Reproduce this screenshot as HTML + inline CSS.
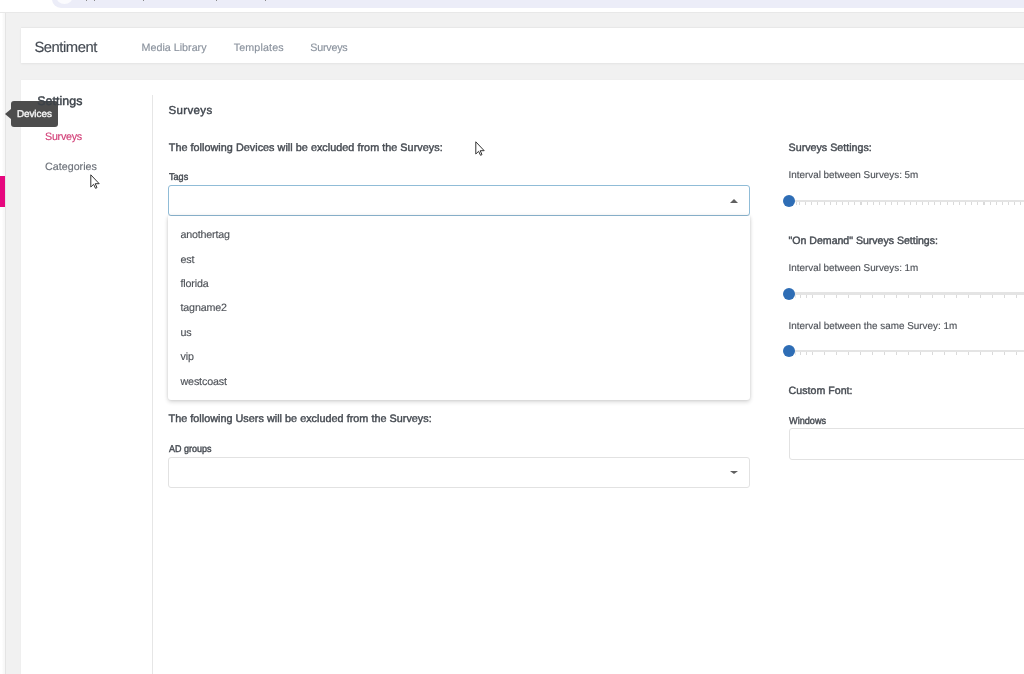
<!DOCTYPE html>
<html><head><meta charset="utf-8"><style>
*{margin:0;padding:0;box-sizing:border-box}
html,body{width:1024px;height:674px;overflow:hidden;background:#f1f1f1;font-family:"Liberation Sans",sans-serif;position:relative}
.t{position:absolute;white-space:nowrap;text-rendering:geometricPrecision}
.abs{position:absolute}
.track{position:absolute;left:788px;width:240px;height:2.4px;background:#e4e4e4}
.ticks{position:absolute;width:240px;height:3px}
.thumb{position:absolute;left:782.5px;width:12px;height:12px;border-radius:50%;background:#2e6db5}
</style></head><body>
<div id="root" style="position:absolute;left:0;top:0;width:1024px;height:674px;overflow:hidden;background:#f1f1f1;filter:blur(0.4px);">
<!-- browser chrome -->
<div class="abs" style="left:0;top:0;width:1024px;height:12px;background:#fff"></div>
<div class="abs" style="left:52px;top:-10px;width:990px;height:17.5px;background:#ecedf8;border-radius:0 0 0 9px"></div>
<div class="abs" style="left:56px;top:-12px;width:17px;height:16px;border-radius:50%;background:#fbfbfe"></div>
<!--bits--><div class="abs" style="left:86px;top:0;width:1.2px;height:1.2px;background:#8a8a8a"></div><div class="abs" style="left:94px;top:0;width:1.2px;height:1.2px;background:#8a8a8a"></div><div class="abs" style="left:142.5px;top:0;width:1.2px;height:1.2px;background:#8a8a8a"></div><div class="abs" style="left:216px;top:0;width:1.2px;height:1.2px;background:#8a8a8a"></div><div class="abs" style="left:265px;top:0;width:1.2px;height:1.2px;background:#8a8a8a"></div>
<div class="abs" style="left:0;top:12px;width:1024px;height:1px;background:#e8e8e8"></div>
<div class="abs" style="left:0;top:13px;width:4.8px;height:661px;background:linear-gradient(90deg,#fff 0 1.8px,#f8f8f8 3.8px)"></div>
<div class="abs" style="left:4.8px;top:13px;width:1.3px;height:661px;background:#e4e4e4"></div>
<!-- header card -->
<div class="abs" style="left:21px;top:28.3px;width:1010px;height:34.6px;background:#fff;box-shadow:0 1px 2px rgba(0,0,0,0.06),0 -1px 1px rgba(0,0,0,0.03)"></div>
<!-- main card -->
<div class="abs" style="left:21px;top:79.6px;width:1010px;height:620px;background:#fff;box-shadow:0 0 1px rgba(0,0,0,0.05)"></div>
<div class="abs" style="left:152px;top:95px;width:1px;height:600px;background:#e6e6e6"></div>
<!-- pink bar -->
<div class="abs" style="left:0;top:176px;width:4.8px;height:31px;background:#e6077e"></div>
<!-- select 1 -->
<div class="abs" style="left:168px;top:185px;width:582px;height:31px;border:1px solid #90bcd7;border-radius:3px;background:#fff"></div>
<div class="abs" style="left:729.8px;top:198.8px;width:0;height:0;border-left:4px solid transparent;border-right:4px solid transparent;border-bottom:4px solid #606060"></div>
<!-- dropdown -->
<div class="abs" style="left:168px;top:216px;width:582px;height:184px;background:#fff;border-radius:0 0 3px 3px;box-shadow:0 2px 4px rgba(0,0,0,0.16),0 0 2px rgba(0,0,0,0.08),0 -1px 4px rgba(0,0,0,0.05)"></div>
<!-- select 2 -->
<div class="abs" style="left:168px;top:457px;width:582px;height:31.2px;border:1px solid #e2e2e2;border-radius:3px;background:#fff"></div>
<div class="abs" style="left:729.8px;top:471.4px;width:0;height:0;border-left:4px solid transparent;border-right:4px solid transparent;border-top:3.9px solid #606060"></div>
<!-- windows input -->
<div class="abs" style="left:788.6px;top:428.2px;width:260px;height:31.4px;border:1px solid #e2e2e2;border-radius:3px;background:#fff"></div>
<div class="track" style="top:199.5px"></div>
<div class="ticks" style="left:799px;top:201.6px;background-image:repeating-linear-gradient(90deg,#dadada 0 1px,transparent 1px 6.15px)"></div><div class="abs" style="left:796px;top:201.6px;width:1px;height:3px;background:#dadada"></div>
<div class="thumb" style="top:194.7px"></div>
<div class="track" style="top:292.4px"></div>
<div class="ticks" style="left:800px;top:294.5px;background-image:repeating-linear-gradient(90deg,#dadada 0 1px,transparent 1px 12px)"></div><div class="abs" style="left:806px;top:294.5px;width:1px;height:3px;background:#dadada"></div><div class="abs" style="left:794.5px;top:294.5px;width:1px;height:3px;background:#ececec"></div>
<div class="thumb" style="top:287.6px"></div>
<div class="track" style="top:349.7px"></div>
<div class="ticks" style="left:800px;top:351.8px;background-image:repeating-linear-gradient(90deg,#dadada 0 1px,transparent 1px 12px)"></div><div class="abs" style="left:806px;top:351.8px;width:1px;height:3px;background:#dadada"></div><div class="abs" style="left:794.5px;top:351.8px;width:1px;height:3px;background:#ececec"></div>
<div class="thumb" style="top:344.9px"></div>
<!-- tooltip -->
<div class="abs" style="left:11px;top:101px;width:47px;height:25.5px;background:#4d4d4d;border-radius:3px"></div>
<div class="abs" style="left:5.2px;top:108.8px;width:0;height:0;border-top:5px solid transparent;border-bottom:5px solid transparent;border-right:6px solid #4d4d4d"></div>
<div class="t" style="left:34.40px;top:41.27px;font-size:14.8px;line-height:14.8px;color:#454b53;-webkit-text-stroke:0.15px #454b53;letter-spacing:-0.459px;">Sentiment</div>
<div class="t" style="left:141.60px;top:42.84px;font-size:10.7px;line-height:10.7px;color:#8b939e;-webkit-text-stroke:0.15px #8b939e;letter-spacing:0.014px;">Media Library</div>
<div class="t" style="left:233.75px;top:42.84px;font-size:10.7px;line-height:10.7px;color:#8b939e;-webkit-text-stroke:0.15px #8b939e;letter-spacing:0.137px;">Templates</div>
<div class="t" style="left:310.25px;top:42.84px;font-size:10.7px;line-height:10.7px;color:#8b939e;-webkit-text-stroke:0.15px #8b939e;letter-spacing:-0.207px;">Surveys</div>
<div class="t" style="left:37.25px;top:95.20px;font-size:12.4px;line-height:12.4px;color:#3c4249;-webkit-text-stroke:0.42px #3c4249;letter-spacing:0.050px;">Settings</div>
<div class="t" style="left:45.00px;top:131.54px;font-size:10.7px;line-height:10.7px;color:#d23d76;-webkit-text-stroke:0.15px #d23d76;letter-spacing:-0.236px;">Surveys</div>
<div class="t" style="left:45.00px;top:162.34px;font-size:10.7px;line-height:10.7px;color:#6d727a;-webkit-text-stroke:0.15px #6d727a;letter-spacing:0.026px;">Categories</div>
<div class="t" style="left:168.50px;top:106.47px;font-size:11.5px;line-height:11.5px;color:#41474f;-webkit-text-stroke:0.42px #41474f;letter-spacing:0.351px;">Surveys</div>
<div class="t" style="left:168.75px;top:143.26px;font-size:10.8px;line-height:10.8px;color:#474c53;-webkit-text-stroke:0.42px #474c53;letter-spacing:0.037px;">The following Devices will be excluded from the Surveys:</div>
<div class="t" style="left:168.50px;top:173.32px;font-size:9.9px;line-height:9.9px;color:#474c53;-webkit-text-stroke:0.42px #474c53;transform:scaleX(0.9230);transform-origin:0 0;">Tags</div>
<div class="t" style="left:180.50px;top:230.14px;font-size:10.7px;line-height:10.7px;color:#50545a;-webkit-text-stroke:0.15px #50545a;letter-spacing:-0.196px;">anothertag</div>
<div class="t" style="left:180.50px;top:254.54px;font-size:10.7px;line-height:10.7px;color:#50545a;-webkit-text-stroke:0.15px #50545a;letter-spacing:-0.150px;">est</div>
<div class="t" style="left:180.50px;top:278.94px;font-size:10.7px;line-height:10.7px;color:#50545a;-webkit-text-stroke:0.15px #50545a;letter-spacing:-0.150px;">florida</div>
<div class="t" style="left:180.50px;top:303.34px;font-size:10.7px;line-height:10.7px;color:#50545a;-webkit-text-stroke:0.15px #50545a;letter-spacing:-0.150px;">tagname2</div>
<div class="t" style="left:180.50px;top:327.74px;font-size:10.7px;line-height:10.7px;color:#50545a;-webkit-text-stroke:0.15px #50545a;letter-spacing:-0.150px;">us</div>
<div class="t" style="left:180.50px;top:352.14px;font-size:10.7px;line-height:10.7px;color:#50545a;-webkit-text-stroke:0.15px #50545a;letter-spacing:-0.150px;">vip</div>
<div class="t" style="left:180.50px;top:376.54px;font-size:10.7px;line-height:10.7px;color:#50545a;-webkit-text-stroke:0.15px #50545a;letter-spacing:-0.130px;">westcoast</div>
<div class="t" style="left:168.50px;top:414.46px;font-size:10.8px;line-height:10.8px;color:#474c53;-webkit-text-stroke:0.42px #474c53;letter-spacing:0.030px;">The following Users will be excluded from the Surveys:</div>
<div class="t" style="left:168.50px;top:445.32px;font-size:9.9px;line-height:9.9px;color:#474c53;-webkit-text-stroke:0.42px #474c53;transform:scaleX(0.9108);transform-origin:0 0;">AD groups</div>
<div class="t" style="left:788.60px;top:143.34px;font-size:10.7px;line-height:10.7px;color:#474c53;-webkit-text-stroke:0.42px #474c53;letter-spacing:0.003px;">Surveys Settings:</div>
<div class="t" style="left:788.60px;top:171.02px;font-size:9.9px;line-height:9.9px;color:#50545a;-webkit-text-stroke:0.15px #50545a;letter-spacing:-0.014px;">Interval between Surveys: 5m</div>
<div class="t" style="left:788.60px;top:235.93px;font-size:10.6px;line-height:10.6px;color:#474c53;-webkit-text-stroke:0.42px #474c53;letter-spacing:-0.024px;">&quot;On Demand&quot; Surveys Settings:</div>
<div class="t" style="left:788.60px;top:264.02px;font-size:9.9px;line-height:9.9px;color:#50545a;-webkit-text-stroke:0.15px #50545a;letter-spacing:-0.014px;">Interval between Surveys: 1m</div>
<div class="t" style="left:788.60px;top:321.72px;font-size:9.9px;line-height:9.9px;color:#50545a;-webkit-text-stroke:0.15px #50545a;letter-spacing:0.002px;">Interval between the same Survey: 1m</div>
<div class="t" style="left:788.60px;top:386.33px;font-size:10.6px;line-height:10.6px;color:#474c53;-webkit-text-stroke:0.42px #474c53;letter-spacing:0.032px;">Custom Font:</div>
<div class="t" style="left:788.60px;top:416.92px;font-size:9.9px;line-height:9.9px;color:#474c53;-webkit-text-stroke:0.42px #474c53;transform:scaleX(0.9263);transform-origin:0 0;">Windows</div>
<div class="t" style="left:16.90px;top:109.72px;font-size:9.9px;line-height:9.9px;color:#f4f4f4;-webkit-text-stroke:0.42px #f4f4f4;letter-spacing:-0.030px;">Devices</div>
<!-- cursors -->
<svg class="abs" style="left:89.5px;top:174px" width="12" height="17" viewBox="0 0 12 17"><path d="M0.8 0.8 L0.8 13 L3.6 10.3 L5.5 14.3 L7 13.6 L5.2 9.7 L9.2 9.7 Z" fill="#fff" stroke="#333" stroke-width="1" stroke-linejoin="round"/></svg>
<svg class="abs" style="left:474.8px;top:141.4px" width="12" height="17" viewBox="0 0 12 17"><path d="M0.8 0.8 L0.8 13 L3.6 10.3 L5.5 14.3 L7 13.6 L5.2 9.7 L9.2 9.7 Z" fill="#fff" stroke="#333" stroke-width="1" stroke-linejoin="round"/></svg>
</div>
</body></html>
